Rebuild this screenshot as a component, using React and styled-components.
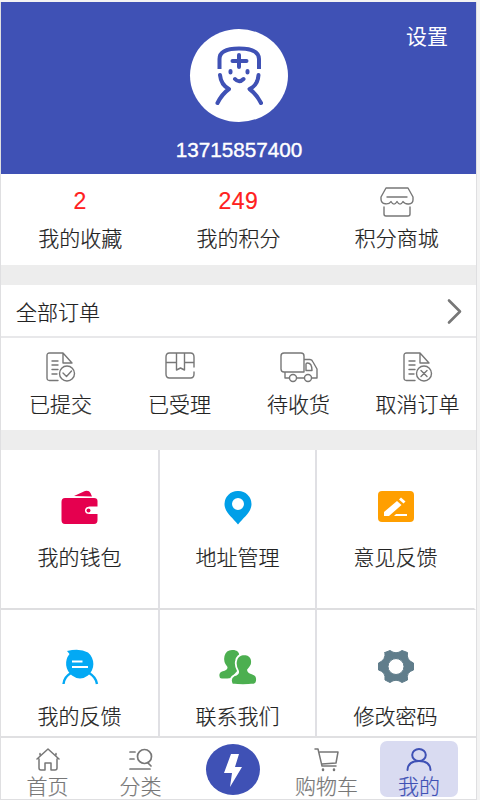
import React from "react";
import styled, { createGlobalStyle } from "styled-components";

const Global = createGlobalStyle`
  * { box-sizing: border-box; }
  body { margin: 0; background: #f4f4f4; font-family: "Liberation Sans", "Noto Sans CJK SC", sans-serif; color: #222; }
`;

const Page = styled.div`
  width: 480px; height: 800px; overflow: hidden;
  padding: 2px 3px 0 0;
  background: #f3f3f3;
`;
const Frame = styled.div`
  height: 798px; display: flex; flex-direction: column;
  border: 1px solid #dfdfe1; border-top: 0;
  background: #fff;
`;
const Header = styled.header`
  height: 172px; flex: none;
  display: grid; grid-template-columns: 1fr auto 1fr;
  background: #3f51b5; color: #fff;
`;
const Profile = styled.div`
  grid-column: 2; display: flex; flex-direction: column; align-items: center;
  padding: 27px 0 0 1px;
`;
const Avatar = styled.div`
  width: 98px; height: 93px; border-radius: 50%; background: #fff;
  display: flex; justify-content: center; padding-top: 15px;
`;
const Phone = styled.div`
  margin-top: 16px; font-size: 20.7px; line-height: 24px; -webkit-text-stroke: 0.4px #fff;
`;
const Settings = styled.div`
  justify-self: end; padding: 20px 28px 0 0;
  font-size: 21px; line-height: 30px;
`;
const Label = styled.div`
  font-size: 21px; line-height: 26px; white-space: nowrap; font-weight: 300;
  font-family: "Noto Sans CJK SC", sans-serif;
  -webkit-text-stroke: 0.2px currentColor;
`;
const Stats = styled.section`
  height: 91px; flex: none; display: grid; grid-template-columns: repeat(3, 158.3px);
`;
const Stat = styled.div`
  display: flex; flex-direction: column; align-items: center;
`;
const StatTop = styled.div`
  height: 50px; padding-top: ${(p) => p.$pad}px;
  font-size: 23px; line-height: 26px; color: #ff2020; letter-spacing: 0.5px;
  -webkit-text-stroke: 0.2px currentColor;
`;
const Gap = styled.div`
  height: 20px; flex: none; background: #ededed;
`;
const OrderHead = styled.div`
  height: 53px; flex: none; display: flex; align-items: center; justify-content: space-between;
  padding: 0 14px 0 15px; border-bottom: 2px solid #e8e8ea;
`;
const Orders = styled.section`
  height: 92px; flex: none; display: grid; grid-template-columns: repeat(4, 119px);
`;
const Order = styled.div`
  display: flex; flex-direction: column; align-items: center; padding-top: 14px;
`;
const OrderIcon = styled.div`
  height: 38px;
`;
const Menu = styled.section`
  height: 286px; flex: none; display: grid;
  grid-template-columns: 159px 157px 1fr; grid-template-rows: 160px 126px;
`;
const MenuItem = styled.div`
  display: flex; flex-direction: column; align-items: center;
  padding-top: ${(p) => (p.$last ? 39 : 40)}px;
  border-right: 2px solid ${(p) => (p.$edge ? "#fff" : "#e0e0e4")};
  border-bottom: ${(p) => (p.$last ? 0 : 2)}px solid #dedee0;
`;
const MenuIcon = styled.div`
  height: 53px;
`;
const TabBar = styled.nav`
  flex: 1; display: grid; grid-template-columns: 93px 93px 93px 93px 1fr;
  border-top: 2px solid #e0e0e2;
`;
const Tab = styled.div`
  display: flex; flex-direction: column; align-items: center;
  height: 56px; margin: 3px ${(p) => (p.$active ? 18 : 0)}px 0 ${(p) => (p.$active ? 7 : 0)}px;
  padding-top: 7px; border-radius: 7px;
  color: ${(p) => (p.$active ? "#3f51b5" : "#777")};
  background: ${(p) => (p.$active ? "#d9dbf1" : "transparent")};
`;
const TabIcon = styled.div`
  height: 25px;
`;
const Flash = styled.div`
  width: 54px; height: 51px; margin: 6px 0 0 19px; border-radius: 50%; background: #3f51b5;
  display: flex; justify-content: center; padding-top: 10px;
`;
const Svg = styled.svg`
  display: block; overflow: visible; fill: none; stroke: ${(p) => p.$stroke || "none"};
  stroke-width: ${(p) => p.$sw || 1.4}; stroke-linecap: round; stroke-linejoin: round;
`;

const Icon = ({ w, h, stroke, sw, children }) => (
  <Svg width={w} height={h} viewBox={`0 0 ${w} ${h}`} $stroke={stroke} $sw={sw} aria-hidden="true">
    {children}
  </Svg>
);

const Face = () => (
  <Icon w={48} h={62} stroke="#3f51b5" sw={4}>
    <path strokeLinecap="butt" d="M4.500 25V15Q4.500 4.500 24 4.500Q44 4.500 44 15V25" />
    <path d="M5 31Q6 41 14 45Q7 50 2.500 59M43.500 31Q43 41 34.500 45Q41.500 50 46 59M24 11V23M17.500 17H31.500M15.500 27V28.500M32.500 27V28.500M20 35Q24 39.500 28.500 35" />
  </Icon>
);
const Shop = () => (
  <Icon w={34} h={30} stroke="#777">
    <path d="M6 1H28L33 10V13C33 18 25 18 23 14.500C21 18 19 18 17 14.500C15 18 13 18 11 14.500C9 18 1 18 1 12V10ZM7 10H27M4 20V27Q4 29 6 29H28Q30 29 30 27V20" />
  </Icon>
);
const Doc = ({ children }) => (
  <Icon w={29} h={30} stroke="#777">
    <path d="M12 28.500H3.500Q1 28.500 1 26V3.500Q1 1 3.500 1H17L26 11H17V1M6 9H12M6 13H12M6 17.500H12M6 22H11" />
    <circle cx="21" cy="21.500" r="7.500" />
    {children}
  </Icon>
);
const Box = () => (
  <Icon w={30} h={28} stroke="#777">
    <path d="M29 15V5Q29 1 25.500 1H4.500Q1 1 1 5V22Q1 26 4.500 26H25.500Q29 26 29 22V20M1 10.500H11M20 10.500H29M11.500 1V18L15.500 16L19.500 18V1" />
  </Icon>
);
const Truck = () => (
  <Icon w={38} h={30} stroke="#777">
    <path d="M4 1H21Q24 1 24 4V20H4Q1 20 1 17V4Q1 1 4 1ZM24 7.500H30Q32 7.500 33 10L37 17V26H32M24 26H17M9 26H5V20M26 12V18.500H32Q32 11 27.500 11Q26 11 26 12Z" />
    <circle cx="13" cy="26" r="3.500" />
    <circle cx="28" cy="26" r="3.500" />
  </Icon>
);
const Wallet = () => (
  <Icon w={37} h={35}>
    <path fill="#e5004f" d="M13 6L24 1Q28 0 29.500 3L31 6.500ZM4 8H33Q36.500 8 36.500 11V16.500H28.500Q24 17 24 20.500Q24 24 28.500 24H36.500V30Q36.500 34 33 34H4Q.5 34 .5 30V12Q.5 8 4 8Z" />
    <circle cx="27.500" cy="20.500" r="2" fill="#e5004f" />
  </Icon>
);
const Pin = () => (
  <Icon w={28} h={35}>
    <path fill="#009fe8" fillRule="evenodd" d="M14 1A13 13 0 0 0 .5 14C.5 22 8 27 14 34.500C20 27 27.500 22 27.500 14A13 13 0 0 0 14 1ZM14 8A6 6 0 1 1 14 20A6 6 0 0 1 14 8Z" />
  </Icon>
);
const Edit = () => (
  <Icon w={36} h={35}>
    <rect y="1" width="36" height="31" rx="4" fill="#ff9f00" />
    <path fill="#fff" d="M6 26V22L19 11L23.500 15L11 26ZM21 9.500L23 7.500L27.500 11.500L25.500 13.500ZM16 26L18 24H29V26Z" />
  </Icon>
);
const Feedback = () => (
  <Icon w={36} h={36}>
    <path fill="#03a9f4" d="M5 2Q18-1 26 3.500A15 15 0 0 1 26 26.500Q18 32.500 10 26.500A15 15 0 0 1 7.500 5Z" />
    <path stroke="#03a9f4" strokeWidth="2.4" strokeLinecap="butt" d="M9 24Q2 28 1.500 35M27 24Q34 28 35 35" />
    <path stroke="#fff" strokeWidth="2" strokeLinecap="butt" d="M10 12.500H20.500M10 18H26" />
  </Icon>
);
const People = () => (
  <Icon w={37} h={36}>
    <path fill="#4caf50" d="M13 1C17 .5 20 3 20 5L19 21L12 29Q4 30 1 29Q-1 24 3 22.500Q9 21 8.500 18Q4 13 5.500 7Q7 1 13 1Z" />
    <path fill="#4caf50" stroke="#fff" strokeWidth="1.800" d="M24.500 5C32 5 34 11 32.500 16Q31 19 29 21Q29 23 33 24.500Q38 26 38 30Q38 35 35 35.500Q24 37 13 35.500Q10 29 15 26.500Q20 25 19 22Q16 17 17 12Q18 6 24.500 5Z" />
  </Icon>
);
const Gear = () => (
  <Icon w={36} h={36}>
    <path fill="#607d8b" stroke="#607d8b" strokeWidth="1" fillRule="evenodd" d="M7 3.500L12 1.500Q18 6 24 1.500L29.500 3.500Q28 11 35.500 14V21Q28 23 29.500 31L24 33.500Q18 29 12 33.500L7 31Q8 23 .5 21V14Q8 11 7 3.500ZM18 9.500A8 8 0 1 0 18 25.500A8 8 0 0 0 18 9.500Z" />
  </Icon>
);
const Home = () => (
  <Icon w={24} h={24} stroke="#777" sw={1.5}>
    <path d="M1 11L12 1L23 11M4 7V5.500M20 7V5.500M3 11V20Q3 22 5 22H9V15H15V22H19Q21 22 21 20V11" />
  </Icon>
);
const Sort = () => (
  <Icon w={24} h={24} stroke="#777" sw={1.7}>
    <circle cx="15.500" cy="8.500" r="7" />
    <path d="M1 4H6M1 11H5M1 21H21M19 15L22 18" />
  </Icon>
);
const Cart = () => (
  <Icon w={25} h={24} stroke="#777" sw={1.5}>
    <path d="M1 1H4L8 18H22M6 4H24L22 15L8 16" />
    <path d="M9 21.500V22M20 21.500V22" strokeWidth="2.500" />
  </Icon>
);
const User = () => (
  <Icon w={24} h={24} stroke="#3f51b5" sw={2}>
    <ellipse cx="12" cy="7" rx="6.800" ry="6" />
    <path d="M.5 22Q1 13 12 13Q23 13 23.500 22" />
  </Icon>
);

const stats = [["2", "我的收藏"], ["249", "我的积分"], [<Shop key="shop" />, "积分商城"]];
const orders = [
  [<Doc><path d="M17 21L20.500 24.500L25.500 19" /></Doc>, "已提交"],
  [<Box />, "已受理"],
  [<Truck />, "待收货"],
  [<Doc><path d="M18 18.500L24 24.500M24 18.500L18 24.500" /></Doc>, "取消订单"],
];
const menu = [
  [<Wallet />, "我的钱包"], [<Pin />, "地址管理"], [<Edit />, "意见反馈"],
  [<Feedback />, "我的反馈"], [<People />, "联系我们"], [<Gear />, "修改密码"],
];

export default function App() {
  return (
    <Page>
      <Global />
      <Frame>
        <Header>
          <Profile>
            <Avatar><Face /></Avatar>
            <Phone>13715857400</Phone>
          </Profile>
          <Settings>设置</Settings>
        </Header>
        <Stats>
          {stats.map(([top, label], i) => (
            <Stat key={label}>
              <StatTop $pad={i === 2 ? 13 : 14}>{top}</StatTop>
              <Label>{label}</Label>
            </Stat>
          ))}
        </Stats>
        <Gap />
        <OrderHead>
          <Label>全部订单</Label>
          <Icon w={15} h={24} stroke="#777" sw={2.6}><path d="M2 1.500L13 12.500L2 23.500" /></Icon>
        </OrderHead>
        <Orders>
          {orders.map(([icon, label]) => (
            <Order key={label}>
              <OrderIcon>{icon}</OrderIcon>
              <Label>{label}</Label>
            </Order>
          ))}
        </Orders>
        <Gap />
        <Menu>
          {menu.map(([icon, label], i) => (
            <MenuItem key={label} $last={i > 2} $edge={i % 3 === 2}>
              <MenuIcon>{icon}</MenuIcon>
              <Label>{label}</Label>
            </MenuItem>
          ))}
        </Menu>
        <TabBar>
          <Tab><TabIcon><Home /></TabIcon><Label>首页</Label></Tab>
          <Tab><TabIcon><Sort /></TabIcon><Label>分类</Label></Tab>
          <Flash>
            <Icon w={20} h={33}><path fill="#fff" d="M8 0H16L12 13H19L7 33L9 19H1Z" /></Icon>
          </Flash>
          <Tab><TabIcon><Cart /></TabIcon><Label>购物车</Label></Tab>
          <Tab $active><TabIcon><User /></TabIcon><Label>我的</Label></Tab>
        </TabBar>
      </Frame>
    </Page>
  );
}
